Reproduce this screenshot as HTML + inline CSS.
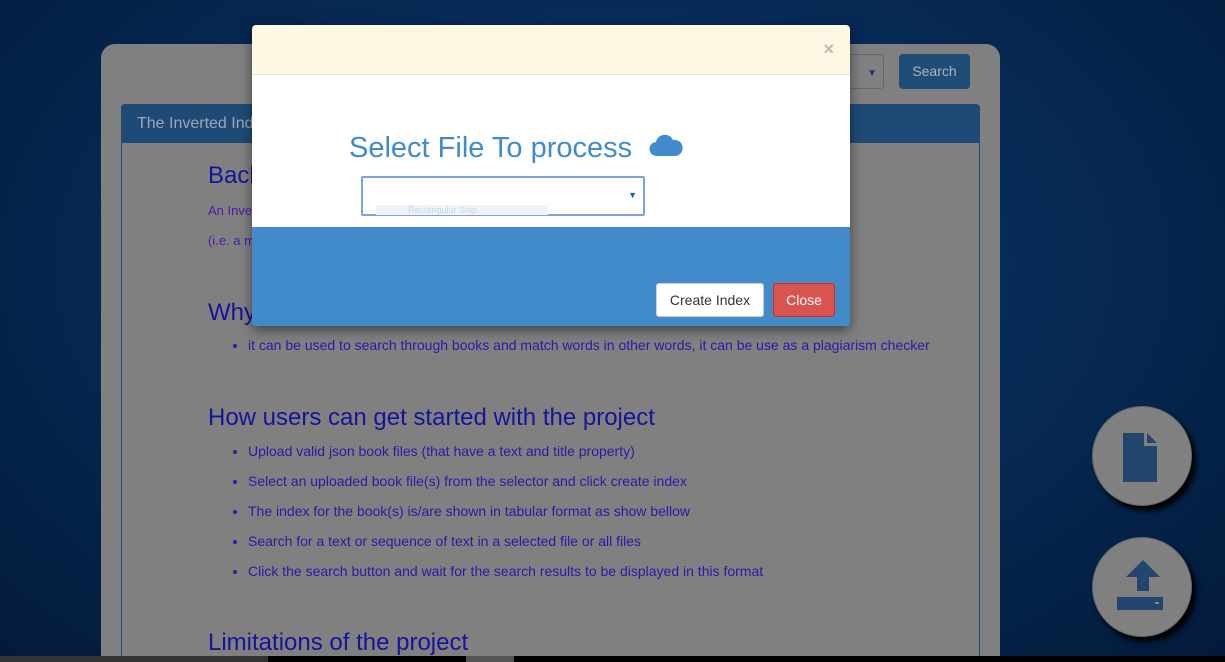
<!DOCTYPE html>
<html style="width:1225px;height:662px;overflow:hidden"><head><style>
*{box-sizing:border-box;margin:0;padding:0}
body{width:1225px;height:662px;overflow:hidden;position:relative;font-family:"Liberation Sans",sans-serif;
background:radial-gradient(ellipse at 50% 40%,#0d3a6a 0%,#062a55 50%,#031a3a 100%);}
.panel{position:absolute;left:101px;top:44px;width:899px;height:618px;background:#808080;border-radius:14px 14px 0 0}
.sel{position:absolute;left:840px;top:54px;width:44px;height:35px;border:1px solid #5a6a7a;border-radius:0 4px 4px 0;color:#1e3a5a;font-size:10px;text-align:right;padding:13px 6px}
.sbtn{position:absolute;left:899px;top:54px;width:71px;height:35px;background:#204d75;border-radius:4px;color:#a9b4c0;font-size:14px;text-align:center;line-height:35px}
.box{position:absolute;left:121px;top:104px;width:859px;height:558px;border:1px solid #1f4a75;border-bottom:none;border-radius:4px 4px 0 0}
.bh{height:38px;background:#1f4a75;color:#9aa8b8;font-size:16px;padding:10px 15px}
.c{position:absolute;left:208px;color:#17149a}
h2{font-weight:normal;font-size:24px;position:absolute;left:208px;color:#17149a}
ul{position:absolute;left:248px;font-size:14px;color:#2a1aa8;list-style:disc}
ul li{height:30px}
.fab{position:absolute;left:1092px;width:100px;height:100px;border-radius:50%;background:#808080;box-shadow:4px 5px 6px #000;border:1px solid #666}
.modal{position:absolute;left:252px;top:25px;width:598px;height:301px;box-shadow:0 4px 12px rgba(0,0,0,.5);border-radius:4px;overflow:hidden}
.mh{height:50px;background:#fdf7e3;border-bottom:1px solid #e5e5e5;position:relative}
.mb{height:152px;background:#fff;position:relative}
.mf{height:99px;background:#428bca;position:relative}
</style></head><body>
<div class="panel"></div>
<div class="sel">▼</div>
<div class="sbtn">Search</div>
<div class="box"><div class="bh">The Inverted Index</div></div>
<h2 style="top:162px">Background</h2>
<div class="c" style="top:203px;font-size:13px;color:#4a1ab0">An Inverted index</div>
<div class="c" style="top:233px;font-size:13px;color:#4a1ab0">(i.e. a mapping</div>
<h2 style="top:299px">Why</h2>
<ul style="top:337px"><li>it can be used to search through books and match words in other words, it can be use as a plagiarism checker</li></ul>
<h2 style="top:404px">How users can get started with the project</h2>
<ul style="top:443px">
<li>Upload valid json book files (that have a text and title property)</li>
<li>Select an uploaded book file(s) from the selector and click create index</li>
<li>The index for the book(s) is/are shown in tabular format as show bellow</li>
<li>Search for a text or sequence of text in a selected file or all files</li>
<li>Click the search button and wait for the search results to be displayed in this format</li></ul>
<h2 style="top:630px;line-height:26px;height:26px;overflow:hidden">Limitations of the project</h2>
<div class="fab" style="top:406px"><svg width="100" height="100" viewBox="0 0 100 100"><path d="M30 26h21v13h13v36H30z" fill="#22466e"/><path d="M54 26l10 10h-10z" fill="#22466e"/></svg></div>
<div class="fab" style="top:537px"><svg width="100" height="100" viewBox="0 0 100 100"><path d="M50 22l-17 17h11v14h12V39h11z" fill="#22466e"/><rect x="24" y="59" width="46" height="13" fill="#22466e"/><rect x="62" y="64" width="4" height="2" fill="#888"/></svg></div>
<div style="position:absolute;left:0;top:656px;width:268px;height:6px;background:#333"></div>
<div style="position:absolute;left:268px;top:656px;width:198px;height:6px;background:#000"></div>
<div style="position:absolute;left:466px;top:656px;width:48px;height:6px;background:#555"></div>
<div style="position:absolute;left:514px;top:656px;width:711px;height:6px;background:#000"></div>
<div class="modal">
<div class="mh"><span style="position:absolute;right:16px;top:14px;color:#bbb;font-size:18px;font-weight:bold">×</span></div>
<div class="mb">
<div style="position:absolute;left:97px;top:57px;font-size:29px;color:#428bca">Select File To process</div>
<svg style="position:absolute;left:397px;top:58px" width="34" height="24" viewBox="0 0 34 24"><path d="M8 23a7 7 0 0 1-1-14 9 9 0 0 1 17-2 7 7 0 0 1 3 16z" fill="#428bca"/></svg>
<div style="position:absolute;left:109px;top:101px;width:284px;height:40px;border:2px solid #7aa2dc;border-radius:2px"><span style="position:absolute;right:6px;top:12px;font-size:9px;color:#2a5aa0">▼</span></div>
<div style="position:absolute;left:124px;top:130px;width:172px;height:10px;background:#eef4fb;font-size:9px;color:#c8d4e4;padding-left:32px">Rectangular Snip</div>
</div>
<div class="mf">
<div style="position:absolute;left:404px;top:56px;width:108px;height:34px;background:#fff;border:1px solid #ccc;border-radius:3px;font-size:14px;color:#333;text-align:center;line-height:32px">Create Index</div>
<div style="position:absolute;left:521px;top:56px;width:62px;height:34px;background:#d9534f;border:1px solid #c9302c;border-radius:3px;font-size:14px;color:#fff;text-align:center;line-height:32px">Close</div>
</div></div>
</body></html>
